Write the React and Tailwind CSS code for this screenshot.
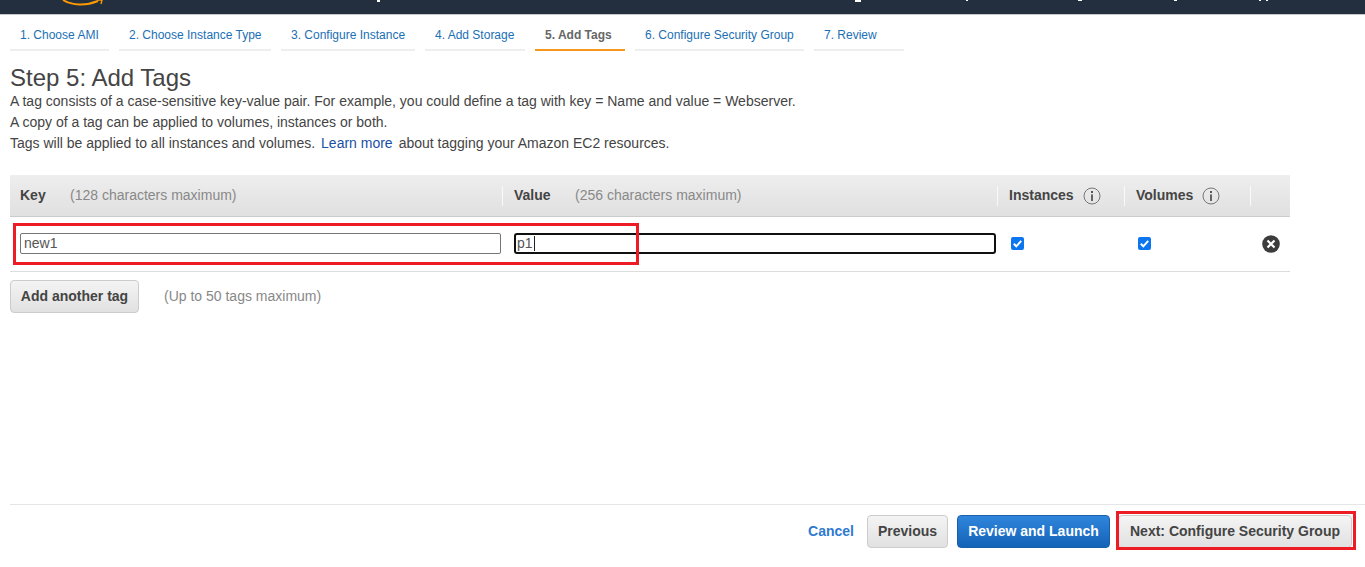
const steps = [
  { label: "1. Choose AMI", width: "w-[99px]" },
  { label: "2. Choose Instance Type", width: "w-[152px]" },
  { label: "3. Configure Instance", width: "w-[134px]" },
  { label: "4. Add Storage", width: "w-[100px]" },
  { label: "5. Add Tags", width: "w-[90px]", active: true },
  { label: "6. Configure Security Group", width: "w-[169px]" },
  { label: "7. Review", width: "w-[90px]" },
];

// bottoms of the nav text that the screenshot cuts off
const specks = [
  "left-[377px] w-[3px] h-[2px]",
  "left-[855px] w-[6px] h-[2px]",
  "left-[966px] w-[2px] h-[1px]",
  "left-[1078px] w-[4px] h-[1px]",
  "left-[1174px] w-[3px] h-[1px]",
  "left-[1259px] w-[2px] h-[1px]",
  "left-[1266px] w-[2px] h-[1px]",
];

function InfoIcon() {
  return (
    <svg width="18" height="18" viewBox="0 0 18 18" className="ml-[9px]">
      <circle cx="9" cy="9" r="8" fill="none" stroke="#777" strokeWidth="1" />
      <rect x="8" y="4" width="2" height="2" fill="#555" />
      <rect x="8.1" y="7.4" width="1.8" height="6.6" fill="#555" />
    </svg>
  );
}

function Checked() {
  return (
    <svg width="13" height="13" viewBox="0 0 13 13">
      <rect width="13" height="13" rx="2" fill="#0b76ef" />
      <path d="M2.8 6.8 5.3 9.3 10.2 3.8" fill="none" stroke="#fff" strokeWidth="2" />
    </svg>
  );
}

export default function App() {
  return (
    <div className="relative h-[567px] overflow-hidden bg-white font-['Liberation_Sans',Arial,sans-serif] text-[14px] text-[#444]">
      {/* Top bar, cut off by the screenshot */}
      <div className="h-[15px] border-b border-[#c4c6c9] bg-[#232f3e]" />
      <svg width="44" height="8" viewBox="0 0 44 8" className="absolute left-[62px] top-0">
        <path d="M1 0 C10 5.5 24 6 36 1" fill="none" stroke="#f90" strokeWidth="2" />
        <path d="M35 0 40 0 39 4" fill="none" stroke="#f90" strokeWidth="1.4" />
      </svg>
      {specks.map((s) => (
        <span key={s} className={`absolute top-0 bg-white ${s}`} />
      ))}

      {/* Wizard steps */}
      <div className="ml-[10px] mt-[4px] flex gap-[10px]">
        {steps.map((s) => (
          <div
            key={s.label}
            className={`${s.width} flex h-[32px] items-center border-b-[2px] pl-[10px] pt-[1px] text-[12px] ${
              s.active ? "border-[#f7981d] font-bold text-[#666]" : "border-[#eee] text-[#1a6fb5]"
            }`}
          >
            {s.label}
          </div>
        ))}
      </div>

      <div className="px-[10px]">
        <h1 className="mt-[14px] text-[24px] leading-[26px] font-normal text-[#444]">Step 5: Add Tags</h1>
        <div className="leading-[21px]">
          <p>A tag consists of a case-sensitive key-value pair. For example, you could define a tag with key = Name and value = Webserver.</p>
          <p>A copy of a tag can be applied to volumes, instances or both.</p>
          <p>
            Tags will be applied to all instances and volumes.
            <span className="ml-[6px] text-[#1a4fa5]">Learn more</span>
            <span className="ml-[6px]">about tagging your Amazon EC2 resources.</span>
          </p>
        </div>

        {/* Tag table */}
        <div className="mt-[21px] w-[1280px]">
          <div className="flex h-[42px] items-center border-b border-[#ccc] bg-gradient-to-b from-[#eeeeee] to-[#e0e0e0]">
            <div className="flex h-[20px] w-[493px] items-center border-r border-[#fafafa] pl-[10px]">
              <span className="w-[50px] font-bold">Key</span>
              <span className="text-[#888]">(128 characters maximum)</span>
            </div>
            <div className="flex h-[20px] w-[495px] items-center border-r border-[#fafafa] pl-[11px]">
              <span className="w-[61px] font-bold">Value</span>
              <span className="text-[#888]">(256 characters maximum)</span>
            </div>
            <div className="flex h-[20px] w-[127px] items-center border-r border-[#fafafa] pl-[11px] font-bold">
              Instances
              <InfoIcon />
            </div>
            <div className="flex h-[20px] w-[126px] items-center border-r border-[#fafafa] pl-[11px] font-bold">
              Volumes
              <InfoIcon />
            </div>
          </div>

          <div className="flex h-[55px] items-center border-b border-[#ddd] pb-[2px]">
            <div className="ml-[10px] flex h-[21px] w-[481px] items-center rounded-[2px] border border-[#767676] pl-[3px] text-[#555]">
              new1
            </div>
            <div className="ml-[13px] flex h-[21px] w-[482px] items-center rounded-[3px] border-2 border-[#101010] pl-[1px] text-[#555]">
              p1
              <span className="ml-[1px] h-[15px] w-px bg-[#222]" />
            </div>
            <div className="ml-[15px] flex w-[127px]">
              <Checked />
            </div>
            <div className="flex w-[125px]">
              <Checked />
            </div>
            <svg width="18" height="18" viewBox="0 0 18 18" className="-ml-[1px] mt-[2px]">
              <circle cx="9" cy="9" r="8.8" fill="#3c3c3c" />
              <path d="M5.5 5.5 12.5 12.5 M12.5 5.5 5.5 12.5" stroke="#fff" strokeWidth="2.2" />
            </svg>
          </div>

          <div className="mt-[8px] flex items-center">
            <button className="h-[33px] w-[129px] rounded-[4px] border border-[#ccc] bg-gradient-to-b from-[#f4f4f4] to-[#e1e1e1] font-bold text-[#444]">
              Add another tag
            </button>
            <span className="ml-[25px] text-[#888]">(Up to 50 tags maximum)</span>
          </div>
        </div>
      </div>

      {/* Footer actions */}
      <div className="absolute bottom-0 left-[10px] right-0 h-[63px] border-t border-[#e6e6e6]">
        <div className="mt-[10px] flex items-center justify-end pr-[13px] font-bold">
          <span className="text-[#2e7ad1]">Cancel</span>
          <button className="ml-[13px] h-[33px] w-[81px] rounded-[4px] border border-[#ccc] bg-gradient-to-b from-[#f4f4f4] to-[#e1e1e1] text-[#444]">
            Previous
          </button>
          <button className="ml-[9px] h-[33px] w-[153px] rounded-[4px] border border-[#1a5fa8] bg-gradient-to-b from-[#2f86dc] to-[#1363b8] text-white">
            Review and Launch
          </button>
          <button className="ml-[8px] h-[33px] w-[234px] rounded-[4px] border border-[#ccc] bg-gradient-to-b from-[#f4f4f4] to-[#e1e1e1] text-[#444]">
            Next: Configure Security Group
          </button>
        </div>
      </div>

      {/* Red annotation boxes drawn over the screenshot */}
      <div className="absolute left-[13px] top-[223px] h-[42px] w-[626px] border-[3px] border-[#ed1c24]" />
      <div className="absolute left-[1116px] top-[511px] h-[39px] w-[240px] border-[3px] border-[#ed1c24]" />
    </div>
  );
}
